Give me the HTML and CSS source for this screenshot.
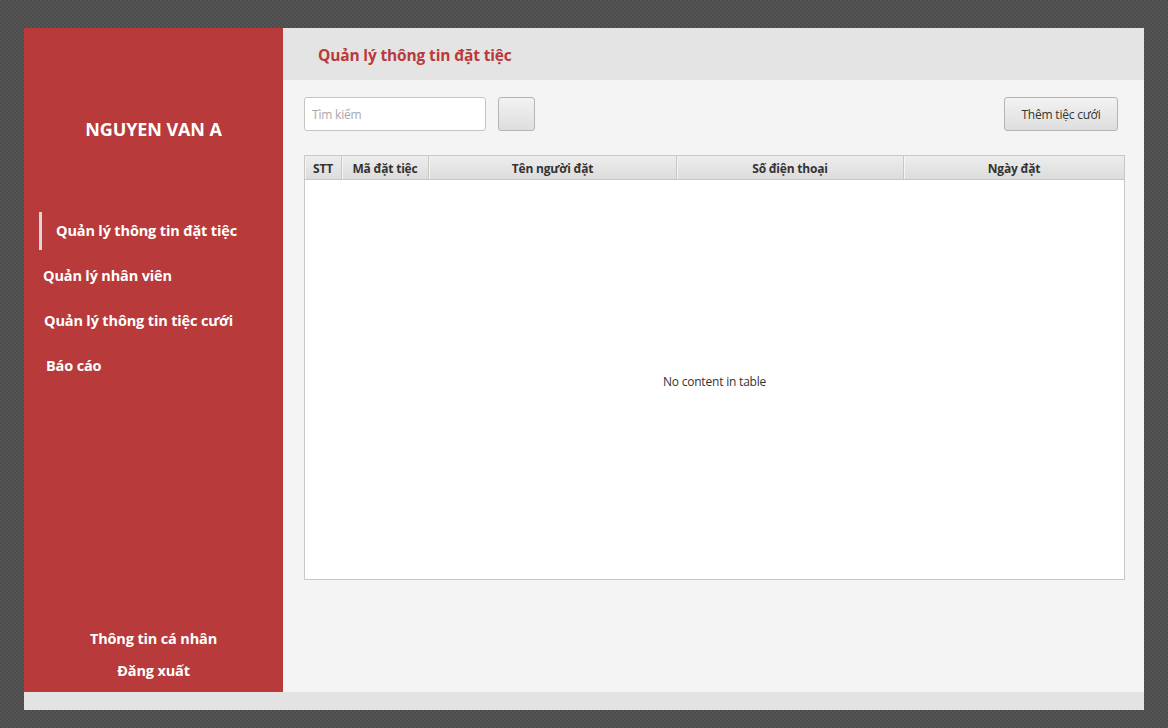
FILE: index.html
```html
<!DOCTYPE html>
<html lang="vi">
<head>
<meta charset="utf-8">
<link rel="stylesheet" href="styles.css">
</head>
<body>
<div class="window">
  <div class="main">
    <aside class="sidebar">
      <div class="user">NGUYEN VAN A</div>
      <nav class="menu">
        <div class="item active">Quản lý thông tin đặt tiệc</div>
        <div class="item i2">Quản lý nhân viên</div>
        <div class="item i3">Quản lý thông tin tiệc cưới</div>
        <div class="item i4">Báo cáo</div>
      </nav>
      <div class="bottom">
        <div class="bitem">Thông tin cá nhân</div>
        <div class="bitem">Đăng xuất</div>
      </div>
    </aside>
    <section class="content">
      <header class="head">Quản lý thông tin đặt tiệc</header>
      <div class="body">
        <div class="toolbar">
          <div class="search">Tìm kiếm</div>
          <div class="btn square"></div>
          <div class="spacer"></div>
          <div class="btn add">Thêm tiệc cưới</div>
        </div>
        <div class="table">
          <div class="thead">
            <div class="th c1">STT</div>
            <div class="th c2">Mã đặt tiệc</div>
            <div class="th c3">Tên người đặt</div>
            <div class="th c4">Số điện thoại</div>
            <div class="th c5">Ngày đặt</div>
          </div>
          <div class="tbody">No content in table</div>
        </div>
      </div>
    </section>
  </div>
  <div class="foot"></div>
</div>
</body>
</html>
```
FILE: styles.css
```css
* { box-sizing: border-box; }
html, body { margin: 0; height: 100%; }
body {
  background-color: #505050;
  background-image: repeating-conic-gradient(#4b4b4b 0 25%, #555555 0 50%);
  background-size: 4px 4px;
  padding: 28px 24px 18px 24px;
  font-family: "Open Sans", "Noto Sans", sans-serif;
}
.window {
  width: 1120px;
  height: 682px;
  display: flex;
  flex-direction: column;
  background: #f4f4f4;
}
.main { flex: 1; display: flex; min-height: 0; }
.foot { height: 18px; background: #e3e3e3; }
.sidebar {
  width: 259px;
  background: #b83a3a;
  color: #fff;
  display: flex;
  flex-direction: column;
}
.user {
  font-weight: 700;
  font-size: 18px;
  text-align: center;
  margin-top: 88px;
  height: 26px;
  line-height: 26px;
  letter-spacing: -0.1px;
}
.menu { margin-top: 70px; display: flex; flex-direction: column; }
.item {
  font-weight: 700;
  font-size: 14.5px;
  letter-spacing: -0.15px;
  height: 38px;
  line-height: 38px;
  margin-bottom: 7px;
}
.item.active {
  margin-left: 15px;
  border-left: 3px solid #d9d9d9;
  padding-left: 14px;
}
.item.i2 { padding-left: 19px; }
.item.i3 { padding-left: 20px; }
.item.i4 { padding-left: 22px; }
.bottom { margin-top: auto; margin-bottom: 5px; }
.bitem {
  font-weight: 700;
  font-size: 14.5px;
  letter-spacing: -0.15px;
  text-align: center;
  height: 32px;
  line-height: 32px;
}
.content { flex: 1; display: flex; flex-direction: column; }
.head {
  height: 52px;
  background: #e4e4e4;
  color: #b83a3a;
  font-weight: 700;
  font-size: 15.5px;
  letter-spacing: -0.15px;
  line-height: 54px;
  padding-left: 35px;
}
.body { padding: 17px 19px 0 21px; }
.toolbar { display: flex; align-items: center; height: 34px; }
.search {
  width: 182px;
  height: 34px;
  background: #fff;
  border: 1px solid #c4c4c4;
  border-radius: 3px;
  font-size: 12px;
  color: #a8a8a8;
  line-height: 34px;
  padding-left: 7px;
  letter-spacing: -0.2px;
}
.btn {
  height: 34px;
  border: 1px solid #b5b5b5;
  border-radius: 3px;
  background: linear-gradient(#f2f2f2, #dedede);
}
.square { width: 37px; margin-left: 12px; }
.spacer { flex: 1; }
.add {
  width: 114px;
  font-size: 12px;
  color: #333;
  text-align: center;
  line-height: 33px;
  letter-spacing: -0.2px;
  margin-right: 7px;
}
.table {
  margin-top: 24px;
  width: 821px;
  height: 425px;
  border: 1px solid #c8c8c8;
  background: #fff;
  display: flex;
  flex-direction: column;
}
.thead {
  display: flex;
  height: 24px;
  background: linear-gradient(#ededed, #dcdcdc);
  border-bottom: 1px solid #c8c8c8;
}
.th {
  font-weight: 700;
  font-size: 12px;
  color: #333;
  text-align: center;
  line-height: 25px;
  border-right: 1px solid #c8c8c8;
  letter-spacing: -0.2px;
  box-shadow: inset 1px 0 #f4f4f4;
}
.c1 { width: 37px; }
.c2 { width: 87px; }
.c3 { width: 248px; }
.c4 { width: 227px; }
.c5 { flex: 1; border-right: none; }
.tbody {
  flex: 1;
  display: flex;
  align-items: center;
  justify-content: center;
  font-size: 12px;
  color: #333;
  letter-spacing: -0.2px;
  padding-top: 4px;
}
```
